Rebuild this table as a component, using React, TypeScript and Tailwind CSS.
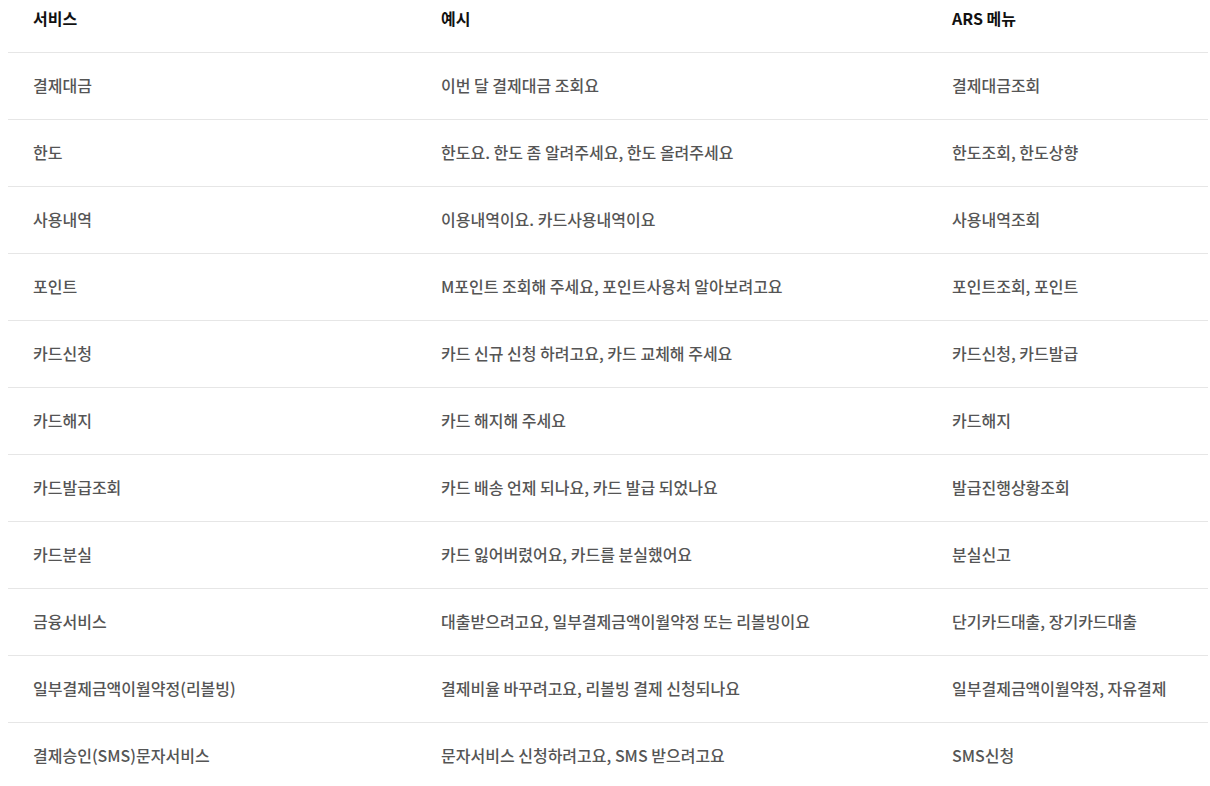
import React from 'react';

const rows: [string, string, string][] = [
  ['결제대금', '이번 달 결제대금 조회요', '결제대금조회'],
  ['한도', '한도요. 한도 좀 알려주세요, 한도 올려주세요', '한도조회, 한도상향'],
  ['사용내역', '이용내역이요. 카드사용내역이요', '사용내역조회'],
  ['포인트', 'M포인트 조회해 주세요, 포인트사용처 알아보려고요', '포인트조회, 포인트'],
  ['카드신청', '카드 신규 신청 하려고요, 카드 교체해 주세요', '카드신청, 카드발급'],
  ['카드해지', '카드 해지해 주세요', '카드해지'],
  ['카드발급조회', '카드 배송 언제 되나요, 카드 발급 되었나요', '발급진행상황조회'],
  ['카드분실', '카드 잃어버렸어요, 카드를 분실했어요', '분실신고'],
  ['금융서비스', '대출받으려고요, 일부결제금액이월약정 또는 리볼빙이요', '단기카드대출, 장기카드대출'],
  ['일부결제금액이월약정(리볼빙)', '결제비율 바꾸려고요, 리볼빙 결제 신청되나요', '일부결제금액이월약정, 자유결제'],
  ['결제승인(SMS)문자서비스', '문자서비스 신청하려고요, SMS 받으려고요', 'SMS신청'],
];

const cols = 'grid grid-cols-[408px_511px_281px]';

const App: React.FC = () => {
  return (
    <div
      className="bg-white w-[1210px] h-[786px] overflow-hidden pl-2 pr-[2px]"
      style={{ fontFamily: '"Noto Sans CJK KR", "Noto Sans", sans-serif' }}
    >
      {/* header */}
      <div className={`${cols} h-[53px] border-b border-[#e6e6e6] text-[16px] font-bold text-[#111] pt-[6px]`}>
        <div className="pl-[25px]">서비스</div>
        <div className="pl-[25px]">예시</div>
        <div className="pl-[25px]">ARS 메뉴</div>
      </div>

      {rows.map(([service, example, menu]) => (
        <div
          key={service}
          className={`${cols} h-[67px] items-center pb-[2px] border-b border-[#e6e6e6] text-[16px] font-medium text-[#555]`}
        >
          <div className="pl-[25px]">{service}</div>
          <div className="pl-[25px]">{example}</div>
          <div className="pl-[25px]">{menu}</div>
        </div>
      ))}
    </div>
  );
};

export default App;
